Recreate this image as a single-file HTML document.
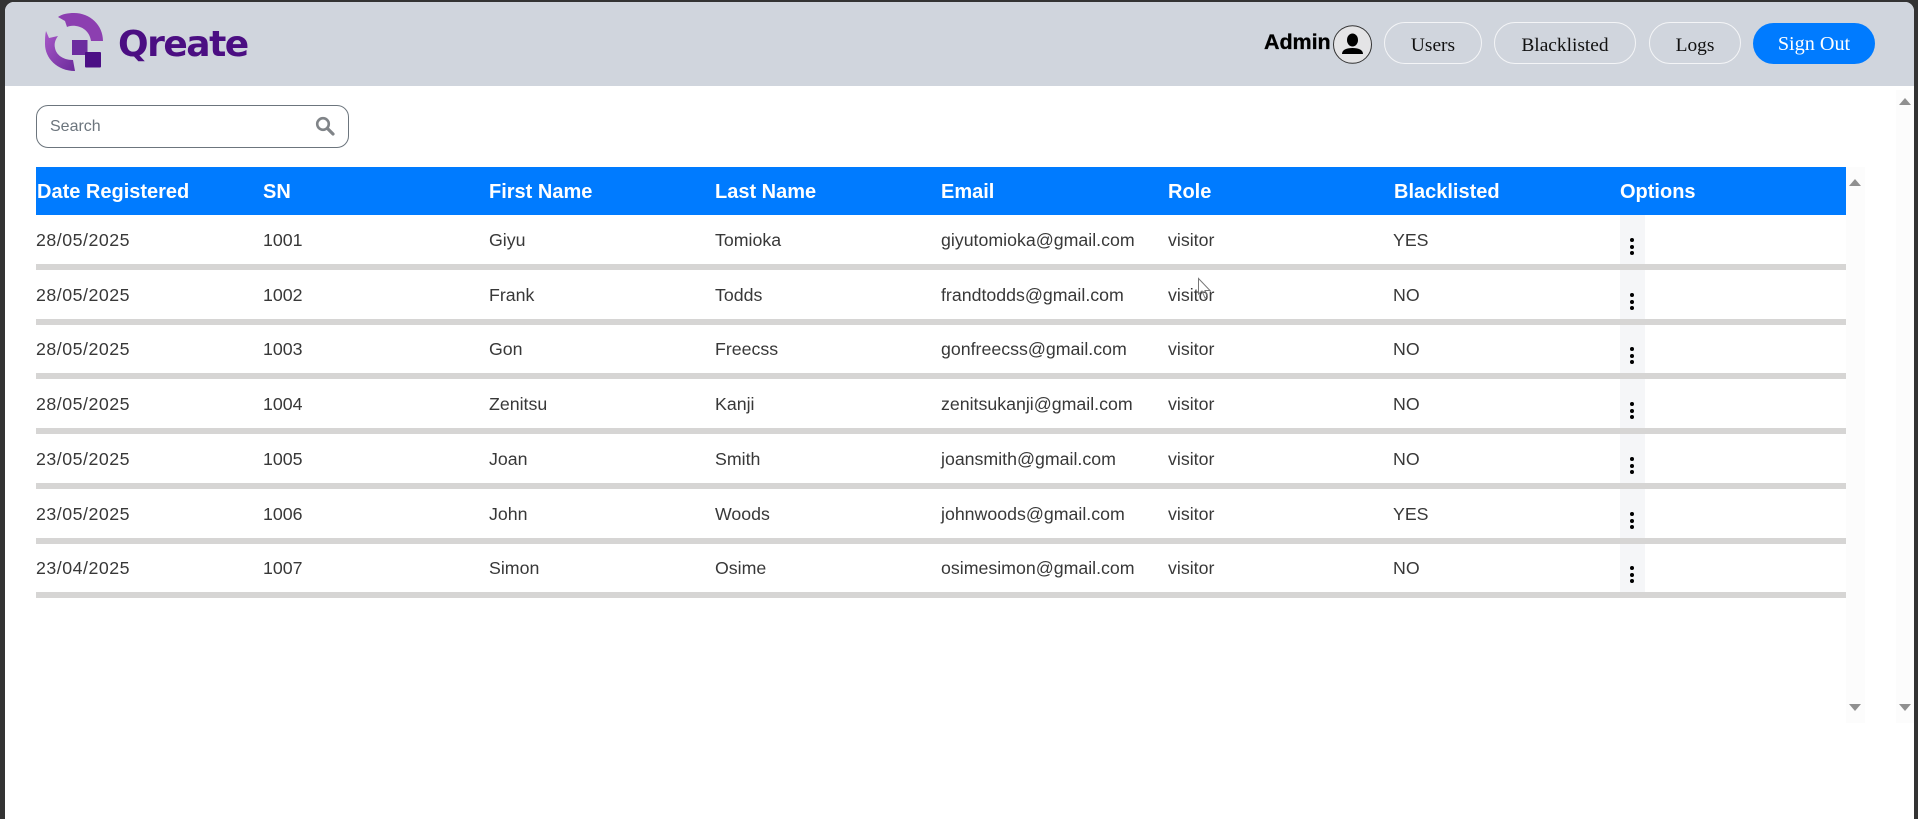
<!DOCTYPE html>
<html><head><meta charset="utf-8"><style>
html,body{margin:0;padding:0;background:#333;width:1918px;height:819px;overflow:hidden}
*{box-sizing:border-box}
.a{position:absolute;white-space:nowrap}
#page{position:absolute;left:5px;top:2px;width:1909px;height:817px;background:#fff;border-radius:9px 9px 0 0;overflow:hidden}
#wrap{position:absolute;left:0;top:0;width:1918px;height:819px;font-family:"Liberation Sans",sans-serif}
.hd{position:absolute;left:5px;top:2px;width:1909px;height:84px;background:#d0d5dd;border-radius:9px 9px 0 0}
.btn{position:absolute;top:22px;height:42px;border:1px solid #f4f5f7;border-radius:21px;font:19.4px "Liberation Serif",serif;color:#111;text-align:center;line-height:45px}
.th{position:absolute;top:178px;font-weight:bold;font-size:20px;color:#fff;line-height:28px;white-space:nowrap}
.td{position:absolute;font-size:17.75px;color:#383838;line-height:24px;white-space:nowrap}
.d{letter-spacing:.52px}
.div{position:absolute;left:36px;width:1810px;height:6px;background:#d6d5d4}
.opt{position:absolute;left:1620px;width:25px;background:#f5f6f8}
.dot{position:absolute;left:1630px;width:4px;height:4px;border-radius:50%;background:#000}
.bar{position:absolute;background:#fcfcfc}
.up{position:absolute;width:0;height:0;border-left:6.5px solid transparent;border-right:6.5px solid transparent;border-bottom:7px solid #909090}
.dn{position:absolute;width:0;height:0;border-left:6.5px solid transparent;border-right:6.5px solid transparent;border-top:7px solid #909090}
</style></head><body>
<div id="wrap">
<div id="page"></div>
<div class="hd"></div>

<svg class="a" style="left:40px;top:8px" width="70" height="70" viewBox="40 8 70 70">
<defs><linearGradient id="g" x1="0" y1="0" x2="1" y2="1"><stop offset="0" stop-color="#a858c8"/><stop offset="1" stop-color="#6a2a9a"/></linearGradient></defs>
<path d="M58 17 C62 14 68 13 74 13 C90 13 103 25 103 41 L91 41 C90 33 84 27 76 26 C72 25.500 69 26 67 27 L65 21 Z" fill="#8c3fb0"/>
<path d="M46 31 L49 38 L58 36 C55 40 54 44 55 48 C56 54 62 60 73 60 L75 71 C57 71 45 58 45 44 C45 39 45 35 46 31 Z" fill="url(#g)"/>
<rect x="72" y="40" width="15.500" height="15" fill="#6c2c9f"/>
<rect x="85" y="52" width="16" height="15.500" rx="1" fill="#4b0f85"/>
</svg>
<div class="a" style="left:118px;top:23px;font-family:'DejaVu Sans',sans-serif;font-size:36px;font-weight:bold;color:#4b0e82;line-height:44px;letter-spacing:-1.500px">Qreate</div>

<div class="a" style="left:1264px;top:28px;font-size:21.500px;font-weight:bold;color:#000;line-height:28px;letter-spacing:-.05px;-webkit-text-stroke:.3px #000">Admin</div>
<svg class="a" style="left:1333px;top:25px" width="39" height="39" viewBox="0 0 39 39">
<ellipse cx="19.500" cy="19.500" rx="19" ry="18.800" fill="#e4e4e6" stroke="#333" stroke-width="1"/>
<ellipse cx="19.500" cy="15" rx="5.500" ry="6.500" fill="#000"/>
<path d="M9 29 C9 25 13 23 19.500 23 C26 23 30 25 30 29 Z" fill="#000"/>
</svg>
<div class="btn" style="left:1384px;width:98px">Users</div>
<div class="btn" style="left:1494px;width:142px">Blacklisted</div>
<div class="btn" style="left:1649px;width:92px">Logs</div>
<div class="btn" style="left:1753px;width:122px;top:23px;height:41px;background:#007bff;border:none;color:#fff;line-height:43px;font-size:20.2px">Sign Out</div>

<div class="a" style="left:36px;top:105px;width:313px;height:43px;border:1px solid #6c757d;border-radius:12px"></div>
<div class="a" style="left:50px;top:115px;font-size:16px;color:#6c757d;line-height:24px">Search</div>
<svg class="a" style="left:315px;top:116px" width="20" height="20" viewBox="0 0 20 20"><circle cx="8" cy="8" r="5.800" fill="none" stroke="#808488" stroke-width="2.600"/><path d="M12.500 12.500L18 18" stroke="#808488" stroke-width="3.200" stroke-linecap="round"/></svg>

<div class="bar" style="left:1846px;top:167px;width:19px;height:556px"></div>
<div class="bar" style="left:1896px;top:90px;width:18px;height:633px"></div>
<div class="up" style="left:1899px;top:98px"></div>
<div class="up" style="left:1849px;top:179px"></div>
<div class="dn" style="left:1849px;top:704px"></div>
<div class="dn" style="left:1899px;top:704px"></div>

<div class="a" style="left:36px;top:167px;width:1810px;height:48px;background:#007bff"></div>
<div class="th" style="left:37px">Date Registered</div>
<div class="th" style="left:263px">SN</div>
<div class="th" style="left:489px">First Name</div>
<div class="th" style="left:715px">Last Name</div>
<div class="th" style="left:941px">Email</div>
<div class="th" style="left:1168px">Role</div>
<div class="th" style="left:1394px">Blacklisted</div>
<div class="th" style="left:1620px">Options</div>

<div class="opt" style="top:215px;height:49px"></div><div class="opt" style="top:270px;height:49px"></div><div class="opt" style="top:325px;height:48px"></div><div class="opt" style="top:379px;height:49px"></div><div class="opt" style="top:434px;height:49px"></div><div class="opt" style="top:489px;height:49px"></div><div class="opt" style="top:544px;height:48px"></div>
<div class="div" style="top:264px"></div><div class="div" style="top:319px"></div><div class="div" style="top:373px"></div><div class="div" style="top:428px"></div><div class="div" style="top:483px"></div><div class="div" style="top:538px"></div><div class="div" style="top:592px"></div>

<div class="td d" style="left:36px;top:228px">28/05/2025</div><div class="td" style="left:263px;top:228px">1001</div><div class="td" style="left:489px;top:228px">Giyu</div><div class="td" style="left:715px;top:228px">Tomioka</div><div class="td" style="left:941px;top:228px">giyutomioka@gmail.com</div><div class="td" style="left:1168px;top:228px">visitor</div><div class="td" style="left:1393px;top:228px">YES</div>
<div class="td d" style="left:36px;top:283px">28/05/2025</div><div class="td" style="left:263px;top:283px">1002</div><div class="td" style="left:489px;top:283px">Frank</div><div class="td" style="left:715px;top:283px">Todds</div><div class="td" style="left:941px;top:283px">frandtodds@gmail.com</div><div class="td" style="left:1168px;top:283px">visitor</div><div class="td" style="left:1393px;top:283px">NO</div>
<div class="td d" style="left:36px;top:337px">28/05/2025</div><div class="td" style="left:263px;top:337px">1003</div><div class="td" style="left:489px;top:337px">Gon</div><div class="td" style="left:715px;top:337px">Freecss</div><div class="td" style="left:941px;top:337px">gonfreecss@gmail.com</div><div class="td" style="left:1168px;top:337px">visitor</div><div class="td" style="left:1393px;top:337px">NO</div>
<div class="td d" style="left:36px;top:392px">28/05/2025</div><div class="td" style="left:263px;top:392px">1004</div><div class="td" style="left:489px;top:392px">Zenitsu</div><div class="td" style="left:715px;top:392px">Kanji</div><div class="td" style="left:941px;top:392px">zenitsukanji@gmail.com</div><div class="td" style="left:1168px;top:392px">visitor</div><div class="td" style="left:1393px;top:392px">NO</div>
<div class="td d" style="left:36px;top:447px">23/05/2025</div><div class="td" style="left:263px;top:447px">1005</div><div class="td" style="left:489px;top:447px">Joan</div><div class="td" style="left:715px;top:447px">Smith</div><div class="td" style="left:941px;top:447px">joansmith@gmail.com</div><div class="td" style="left:1168px;top:447px">visitor</div><div class="td" style="left:1393px;top:447px">NO</div>
<div class="td d" style="left:36px;top:502px">23/05/2025</div><div class="td" style="left:263px;top:502px">1006</div><div class="td" style="left:489px;top:502px">John</div><div class="td" style="left:715px;top:502px">Woods</div><div class="td" style="left:941px;top:502px">johnwoods@gmail.com</div><div class="td" style="left:1168px;top:502px">visitor</div><div class="td" style="left:1393px;top:502px">YES</div>
<div class="td d" style="left:36px;top:556px">23/04/2025</div><div class="td" style="left:263px;top:556px">1007</div><div class="td" style="left:489px;top:556px">Simon</div><div class="td" style="left:715px;top:556px">Osime</div><div class="td" style="left:941px;top:556px">osimesimon@gmail.com</div><div class="td" style="left:1168px;top:556px">visitor</div><div class="td" style="left:1393px;top:556px">NO</div>

<div class="dot" style="top:238px"></div><div class="dot" style="top:245px"></div><div class="dot" style="top:251px"></div>
<div class="dot" style="top:293px"></div><div class="dot" style="top:300px"></div><div class="dot" style="top:306px"></div>
<div class="dot" style="top:347px"></div><div class="dot" style="top:354px"></div><div class="dot" style="top:360px"></div>
<div class="dot" style="top:402px"></div><div class="dot" style="top:409px"></div><div class="dot" style="top:415px"></div>
<div class="dot" style="top:457px"></div><div class="dot" style="top:464px"></div><div class="dot" style="top:470px"></div>
<div class="dot" style="top:512px"></div><div class="dot" style="top:519px"></div><div class="dot" style="top:525px"></div>
<div class="dot" style="top:566px"></div><div class="dot" style="top:573px"></div><div class="dot" style="top:579px"></div>

<svg class="a" style="left:1197px;top:277px" width="16" height="24" viewBox="0 0 16 24"><path d="M1.500 1.500V17L5 14L8 21L10.500 20L8 13.500H13Z" fill="none" stroke="#777" stroke-width="1"/></svg>
</div>
</body></html>
